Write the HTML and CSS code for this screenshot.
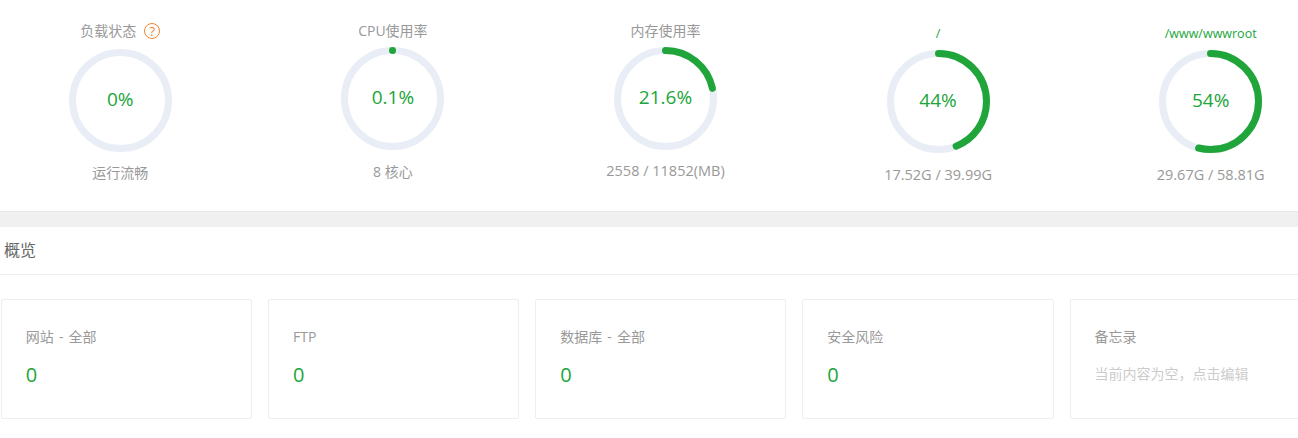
FILE: index.html
```html
<!DOCTYPE html>
<html>
    <head>
        <meta charset="utf-8">
        <link rel="stylesheet" href="styles.css">
    </head>
    <body>
        <div class="gauges">
            <div class="gauge gauge-load">
                <div class="gauge-title">负载状态<span class="help">?</span></div>
                <div class="ring">
                    <svg width="103" height="103" viewBox="0 0 103 103">
                        <circle class="track" cx="51.5" cy="51.5" r="48"></circle>
                    </svg>
                    <div class="ring-value">0%</div>
                </div>
                <div class="gauge-sub">运行流畅</div>
            </div>
            <div class="gauge gauge-cpu">
                <div class="gauge-title">CPU使用率</div>
                <div class="ring">
                    <svg width="103" height="103" viewBox="0 0 103 103">
                        <circle class="track" cx="51.5" cy="51.5" r="48"></circle>
                        <circle class="bar" cx="51.5" cy="51.5" r="48" pathLength="100" stroke-dasharray="0.01 100" transform="rotate(-90 51.5 51.5)"></circle>
                    </svg>
                    <div class="ring-value">0.1%</div>
                </div>
                <div class="gauge-sub">8 核心</div>
            </div>
            <div class="gauge gauge-mem">
                <div class="gauge-title">内存使用率</div>
                <div class="ring">
                    <svg width="103" height="103" viewBox="0 0 103 103">
                        <circle class="track" cx="51.5" cy="51.5" r="48"></circle>
                        <circle class="bar" cx="51.5" cy="51.5" r="48" pathLength="100" stroke-dasharray="21.6 100" transform="rotate(-90 51.5 51.5)"></circle>
                    </svg>
                    <div class="ring-value">21.6%</div>
                </div>
                <div class="gauge-sub">2558 / 11852(MB)</div>
            </div>
            <div class="gauge gauge-disk">
                <div class="gauge-title">/</div>
                <div class="ring">
                    <svg width="103" height="103" viewBox="0 0 103 103">
                        <circle class="track" cx="51.5" cy="51.5" r="48"></circle>
                        <circle class="bar" cx="51.5" cy="51.5" r="48" pathLength="100" stroke-dasharray="44 100" transform="rotate(-90 51.5 51.5)"></circle>
                    </svg>
                    <div class="ring-value">44%</div>
                </div>
                <div class="gauge-sub">17.52G / 39.99G</div>
            </div>
            <div class="gauge gauge-disk">
                <div class="gauge-title">/www/wwwroot</div>
                <div class="ring">
                    <svg width="103" height="103" viewBox="0 0 103 103">
                        <circle class="track" cx="51.5" cy="51.5" r="48"></circle>
                        <circle class="bar" cx="51.5" cy="51.5" r="48" pathLength="100" stroke-dasharray="54 100" transform="rotate(-90 51.5 51.5)"></circle>
                    </svg>
                    <div class="ring-value">54%</div>
                </div>
                <div class="gauge-sub">29.67G / 58.81G</div>
            </div>
        </div>

        <div class="divider"></div>

        <div class="section-title">概览</div>

        <div class="cards">
            <div class="card">
                <div class="card-label">网站 - 全部</div>
                <div class="card-value">0</div>
            </div>
            <div class="card">
                <div class="card-label">FTP</div>
                <div class="card-value">0</div>
            </div>
            <div class="card">
                <div class="card-label">数据库 - 全部</div>
                <div class="card-value">0</div>
            </div>
            <div class="card">
                <div class="card-label">安全风险</div>
                <div class="card-value">0</div>
            </div>
            <div class="card">
                <div class="card-label">备忘录</div>
                <div class="card-note">当前内容为空，点击编辑</div>
            </div>
        </div>
    </body>
</html>
```

FILE: styles.css
```css
html, body {
    margin: 0;
    height: 438px;
    overflow: hidden;
    background-color: #fff;
}
body {
    font-family: "Open Sans", "Noto Sans CJK SC", sans-serif;
    font-size: 14px;
    color: #999;
}

.gauges {
    display: flex;
    width: 1363px;
    height: 211px;
    margin-left: -16px;
}
.gauge {
    width: 272.6px;
    display: flex;
    flex-direction: column;
    align-items: center;
    text-align: center;
}
.gauge-title {
    height: 20px;
    line-height: 20px;
    display: flex;
    align-items: center;
}
.gauge-sub {
    line-height: 20px;
}
.ring {
    display: grid;
    width: 103px;
    height: 103px;
    place-items: center;
}
.ring svg,
.ring-value {
    grid-area: 1 / 1;
}
.ring svg {
    display: block;
}
.ring-value {
    padding-bottom: 3px;
    font-size: 19px;
    color: #20a53a;
}
.track,
.bar {
    fill: none;
    stroke-width: 7;
}
.track {
    stroke: #e9edf5;
}
.bar {
    stroke: #20a53a;
    stroke-linecap: round;
}

.help {
    width: 14px;
    height: 14px;
    line-height: 14px;
    margin-left: 8px;
    border: 1px solid #f0862e;
    border-radius: 50%;
    font-size: 13px;
    color: #f0862e;
}

.gauge-load { padding-top: 21px; }
.gauge-load .ring { margin-top: 8px; }
.gauge-load .gauge-sub { margin-top: 11px; }

.gauge-cpu,
.gauge-mem { padding-top: 21px; }
.gauge-cpu .ring,
.gauge-mem .ring { margin-top: 6px; }
.gauge-cpu .gauge-sub { margin-top: 12px; }
.gauge-mem .gauge-sub {
    margin-top: 11px;
    font-size: 14.5px;
}

.gauge-disk { padding-top: 24px; }
.gauge-disk .ring { margin-top: 6px; }
.gauge-disk .gauge-sub {
    margin-top: 12px;
    font-size: 14.5px;
}
.gauge-disk .gauge-title {
    font-size: 12.5px;
    color: #20a53a;
}

.divider {
    height: 15px;
    background-color: #f0f0f0;
    border-top: 1px solid #e8e8e8;
}

.section-title {
    height: 47px;
    line-height: 47px;
    padding-left: 4px;
    font-size: 16px;
    color: #666;
    border-bottom: 1px solid #eee;
}

.cards {
    display: flex;
    gap: 16px;
    width: 1340px;
    margin: 24px 0 0 0.8px;
}
.card {
    flex: none;
    width: 201.2px;
    height: 118px;
    border: 1px solid #eee;
    border-radius: 2px;
    padding: 0 24px;
}
.card-label {
    margin-top: 27px;
    line-height: 20px;
    word-spacing: 1.5px;
}
.card-value {
    margin-top: 14px;
    font-size: 20px;
    line-height: 28px;
    color: #20a53a;
}
.card-note {
    margin-top: 17px;
    font-size: 14px;
    line-height: 20px;
    color: #ccc;
}
```
